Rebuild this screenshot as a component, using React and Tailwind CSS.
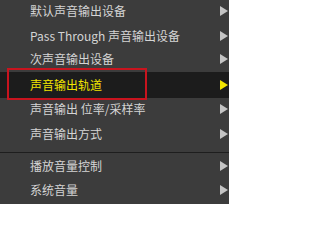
import React from 'react';

const items = [
  { label: '默认声音输出设备', h: 'h-[24px] pb-[2px]' },
  { label: 'Pass Through 声音输出设备', h: 'h-[24px] pb-[1px]' },
  { label: '次声音输出设备', h: 'h-[24px] pb-[2px]' },
  { label: '声音输出轨道', h: 'h-[26px]', active: true },
  { label: '声音输出 位率/采样率', h: 'h-[24px] pb-[2px]' },
  { label: '声音输出方式', h: 'h-[24px]' },
  { sep: true },
  { label: '播放音量控制', h: 'h-[24px]' },
  { label: '系统音量', h: 'h-[24px]' },
];

const Arrow = ({ active }) => (
  <svg width="8" height="10" viewBox="0 0 8 10" className="shrink-0">
    <path d="M0 0 L8 5 L0 10 Z" fill={active ? '#f2e500' : '#c4c4c4'} />
  </svg>
);

const App = () => {
  return (
    <div
      className="w-[229px] h-[204px] bg-[#3c3c3c] overflow-hidden text-[12px] leading-none"
      style={{ fontFamily: '"Noto Sans CJK SC", "Noto Sans", sans-serif' }}
    >
      {items.map((item, i) =>
        item.sep ? (
          <div key={i} className="h-[8px] pt-[6px]">
            <div className="h-px bg-[#1e1e1e]" />
          </div>
        ) : (
          <div
            key={i}
            className={`relative flex items-center justify-between pl-[30px] pr-[1px] ${item.h} ${
              item.active ? 'bg-[#1c1c1c] text-[#f2e500]' : 'text-[#d4d4d4]'
            }`}
          >
            <span className="whitespace-nowrap">{item.label}</span>
            <Arrow active={item.active} />
            {item.active && (
              <div className="absolute left-[7px] -top-[4px] w-[140px] h-[32px] border-2 border-[#c8141e]" />
            )}
          </div>
        )
      )}
    </div>
  );
};

export default App;
